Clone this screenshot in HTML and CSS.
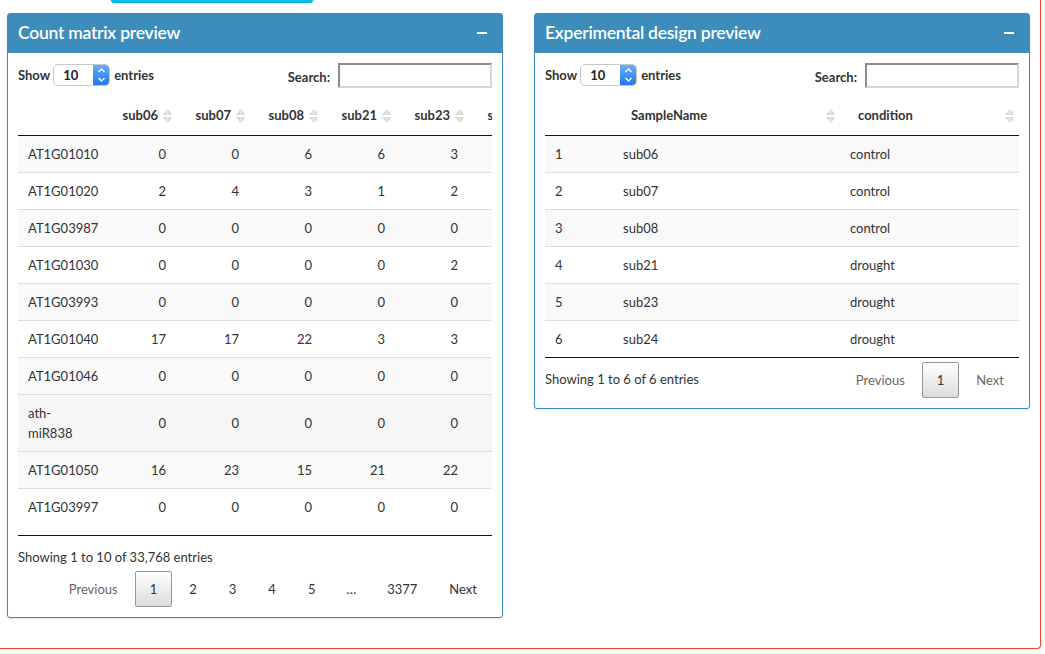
FILE: index.html
```html
<!DOCTYPE html>
<html>
<head>
<meta charset="utf-8">
<link rel="stylesheet" href="styles.css">
</head>
<body>
<div class="frame">
  <div class="topbtn"></div>
  <div class="row">
    <div class="box">
      <div class="box-header">
        <h3 class="box-title">Count matrix preview</h3>
        <span class="minus"></span>
      </div>
      <div class="box-body">
        <div class="dt-controls">
          <div class="len">Show <span class="select"><span class="val">10</span><span class="spin"><svg width="17" height="22" viewBox="0 0 17 22"><path d="M5.5 8 L8.5 5 L11.5 8" fill="none" stroke="#fff" stroke-width="1.4"/><path d="M5.5 14 L8.5 17 L11.5 14" fill="none" stroke="#fff" stroke-width="1.4"/></svg></span></span> entries</div>
          <div class="search">Search:<span class="input"></span></div>
        </div>
        <div class="scroll">
          <table class="dt counts">
            <colgroup><col class="c-name"><col class="c-num"><col class="c-num"><col class="c-num"><col class="c-num"><col class="c-num"><col class="c-num"></colgroup>
            <thead>
              <tr>
                <th class="blank"></th>
                <th class="num">sub06<span class="sort"></span></th>
                <th class="num">sub07<span class="sort"></span></th>
                <th class="num">sub08<span class="sort"></span></th>
                <th class="num">sub21<span class="sort"></span></th>
                <th class="num">sub23<span class="sort"></span></th>
                <th class="num">sub24<span class="sort"></span></th>
              </tr>
            </thead>
            <tbody>
              <tr class="odd"><td>AT1G01010</td><td class="num">0</td><td class="num">0</td><td class="num">6</td><td class="num">6</td><td class="num">3</td><td class="num">4</td></tr>
              <tr><td>AT1G01020</td><td class="num">2</td><td class="num">4</td><td class="num">3</td><td class="num">1</td><td class="num">2</td><td class="num">2</td></tr>
              <tr class="odd"><td>AT1G03987</td><td class="num">0</td><td class="num">0</td><td class="num">0</td><td class="num">0</td><td class="num">0</td><td class="num">0</td></tr>
              <tr><td>AT1G01030</td><td class="num">0</td><td class="num">0</td><td class="num">0</td><td class="num">0</td><td class="num">2</td><td class="num">0</td></tr>
              <tr class="odd"><td>AT1G03993</td><td class="num">0</td><td class="num">0</td><td class="num">0</td><td class="num">0</td><td class="num">0</td><td class="num">0</td></tr>
              <tr><td>AT1G01040</td><td class="num">17</td><td class="num">17</td><td class="num">22</td><td class="num">3</td><td class="num">3</td><td class="num">9</td></tr>
              <tr class="odd"><td>AT1G01046</td><td class="num">0</td><td class="num">0</td><td class="num">0</td><td class="num">0</td><td class="num">0</td><td class="num">0</td></tr>
              <tr class="hover"><td>ath-miR838</td><td class="num">0</td><td class="num">0</td><td class="num">0</td><td class="num">0</td><td class="num">0</td><td class="num">0</td></tr>
              <tr class="odd"><td>AT1G01050</td><td class="num">16</td><td class="num">23</td><td class="num">15</td><td class="num">21</td><td class="num">22</td><td class="num">20</td></tr>
              <tr><td>AT1G03997</td><td class="num">0</td><td class="num">0</td><td class="num">0</td><td class="num">0</td><td class="num">0</td><td class="num">0</td></tr>
            </tbody>
          </table>
        </div>
        <div class="info">Showing 1 to 10 of 33,768 entries</div>
        <div class="paginate">
          <span class="pbtn disabled">Previous</span>
          <span class="pbtn current">1</span>
          <span class="pbtn">2</span>
          <span class="pbtn">3</span>
          <span class="pbtn">4</span>
          <span class="pbtn">5</span>
          <span class="ellipsis">…</span>
          <span class="pbtn">3377</span>
          <span class="pbtn">Next</span>
        </div>
      </div>
    </div>

    <div class="box">
      <div class="box-header">
        <h3 class="box-title">Experimental design preview</h3>
        <span class="minus"></span>
      </div>
      <div class="box-body">
        <div class="dt-controls">
          <div class="len">Show <span class="select"><span class="val">10</span><span class="spin"><svg width="17" height="22" viewBox="0 0 17 22"><path d="M5.5 8 L8.5 5 L11.5 8" fill="none" stroke="#fff" stroke-width="1.4"/><path d="M5.5 14 L8.5 17 L11.5 14" fill="none" stroke="#fff" stroke-width="1.4"/></svg></span></span> entries</div>
          <div class="search">Search:<span class="input"></span></div>
        </div>
        <div class="plain">
          <table class="dt design">
            <colgroup><col class="c-idx"><col class="c-sample"><col class="c-cond"></colgroup>
            <thead>
              <tr>
                <th class="blank"></th>
                <th class="txt">SampleName<span class="sort"></span></th>
                <th class="txt">condition<span class="sort"></span></th>
              </tr>
            </thead>
            <tbody>
              <tr class="odd"><td>1</td><td>sub06</td><td>control</td></tr>
              <tr><td>2</td><td>sub07</td><td>control</td></tr>
              <tr class="odd"><td>3</td><td>sub08</td><td>control</td></tr>
              <tr><td>4</td><td>sub21</td><td>drought</td></tr>
              <tr class="odd"><td>5</td><td>sub23</td><td>drought</td></tr>
              <tr><td>6</td><td>sub24</td><td>drought</td></tr>
            </tbody>
          </table>
        </div>
        <div class="footer-line">
          <div class="info inline">Showing 1 to 6 of 6 entries</div>
          <div class="paginate inline">
            <span class="pbtn disabled">Previous</span>
            <span class="pbtn current">1</span>
            <span class="pbtn disabled">Next</span>
          </div>
        </div>
      </div>
    </div>
  </div>
</div>
</body>
</html>
```

FILE: styles.css
```css
* { box-sizing: border-box; }
html, body { margin: 0; padding: 0; background: #fff; }
body {
  font-family: Lato, "Open Sans", sans-serif;
  font-size: 14px;
  color: #333;
  overflow: hidden;
  width: 1045px;
  height: 654px;
}
.frame {
  width: 1041px;
  height: 649px;
  border-right: 1px solid #e9462f;
  border-bottom: 1px solid #e9462f;
  border-bottom-right-radius: 4px;
  padding-left: 7px;
}
.topbtn {
  margin-left: 104px;
  width: 202px;
  height: 3px;
  background: #00c0ef;
  border-bottom: 1px solid #00acd6;
  border-radius: 0 0 3px 3px;
}
.row {
  display: flex;
  align-items: flex-start;
  gap: 31px;
  margin-top: 10px;
}
.box {
  width: 496px;
  border: 1px solid #3c8dbc;
  border-radius: 3px;
  background: #fff;
  box-shadow: 0 1px 2px rgba(0,0,0,0.12);
}
.box-header {
  height: 39px;
  background: #3c8dbc;
  color: #fff;
  display: flex;
  align-items: center;
  justify-content: space-between;
  padding: 0 15px 0 10px;
}
.box-title {
  margin: 0;
  padding-bottom: 2px;
  font-size: 17.5px;
  font-weight: 600;
  line-height: 1;
  letter-spacing: -0.25px;
}
.minus {
  width: 10px;
  height: 2px;
  background: #fff;
  margin-bottom: 1px;
}
.box-body { padding: 10px; }
.dt-controls {
  display: flex;
  justify-content: space-between;
  align-items: flex-start;
  height: 25px;
  font-weight: 700;
  font-size: 13px;
}
.len {
  display: flex;
  align-items: center;
  height: 22px;
  margin-top: 1px;
}
.select {
  display: flex;
  width: 57px;
  height: 22px;
  margin: 0 4px 0 3px;
  border: 1px solid #c8c8c8;
  border-radius: 5px;
  background: #fff;
  overflow: hidden;
}
.select .val {
  flex: 1;
  padding-left: 9px;
  line-height: 20px;
  font-weight: 700;
  color: #222;
}
.select .spin {
  width: 17px;
  height: 22px;
  margin-top: -1px;
  margin-right: -1px;
  background: linear-gradient(#69b1fb, #1a76ee);
  border-radius: 0 5px 5px 0;
}
.select .spin svg { display: block; }
.search {
  display: flex;
  align-items: center;
  height: 25px;
  padding-top: 2px;
}
.input {
  display: block;
  width: 154px;
  height: 25px;
  margin-left: 8px;
  border-style: solid;
  border-width: 2px;
  border-color: #8c8c8c #d6d6d6 #d6d6d6 #8c8c8c;
  background: #fff;
  margin-top: -2px;
}
.scroll {
  margin-top: 9px;
  width: 474px;
  overflow: hidden;
  padding-bottom: 10px;
  border-bottom: 1px solid #111;
}
.plain {
  margin-top: 9px;
  border-bottom: 1px solid #111;
}
table.dt {
  border-collapse: separate;
  border-spacing: 0;
  table-layout: fixed;
}
table.counts { width: 523px; }
table.design { width: 474px; }
col.c-name { width: 85px; }
col.c-num { width: 73px; }
col.c-idx { width: 68px; }
col.c-sample { width: 227px; }
col.c-cond { width: 179px; }
.dt th {
  position: relative;
  font-weight: 700;
  font-size: 13px;
  line-height: 20px;
  padding: 8px 18px 10px 10px;
  border-bottom: 1px solid #111;
  white-space: nowrap;
  overflow: hidden;
}
.dt th.num { text-align: right; }
.dt th.txt { text-align: left; padding-left: 18px; }
.dt .sort {
  position: absolute;
  right: 4px;
  top: 12px;
  width: 9px;
  height: 14px;
  background:
    linear-gradient(to bottom right, transparent 50%, #dadada 50%) 0 0 / 4.5px 6px no-repeat,
    linear-gradient(to bottom left, transparent 50%, #dadada 50%) 4.5px 0 / 4.5px 6px no-repeat,
    linear-gradient(to top right, transparent 50%, #dadada 50%) 0 8px / 4.5px 6px no-repeat,
    linear-gradient(to top left, transparent 50%, #dadada 50%) 4.5px 8px / 4.5px 6px no-repeat;
}
.design .sort { right: 5px; }
.dt td {
  font-size: 13px;
  line-height: 20px;
  padding: 8px 10px;
  border-top: 1px solid #ddd;
  vertical-align: middle;
}
.dt tbody tr:first-child td { border-top: none; }
.dt td.num { text-align: right; }
.dt tr.odd td { background: #f9f9f9; }
.dt tr.hover td { background: #f6f6f6; }
.info {
  padding-top: 11px;
  line-height: 20px;
  font-size: 13px;
}
.paginate {
  display: flex;
  justify-content: flex-end;
  align-items: center;
  margin-top: 4px;
  font-size: 13px;
}
.pbtn {
  display: block;
  min-width: 21px;
  padding: 7px 14px;
  line-height: 20px;
  margin-left: 2px;
  border: 1px solid transparent;
  border-radius: 2px;
  color: #333;
  text-align: center;
}
.pbtn.disabled { color: #666; }
.pbtn.current {
  border-color: #979797;
  background: linear-gradient(#fff, #dcdcdc);
}
.ellipsis {
  display: block;
  padding: 0 14px;
  margin-left: 2px;
}
.footer-line {
  display: flex;
  justify-content: space-between;
  align-items: flex-start;
}
.info.inline { padding-top: 11px; }
.paginate.inline { margin-top: 4px; }
```
